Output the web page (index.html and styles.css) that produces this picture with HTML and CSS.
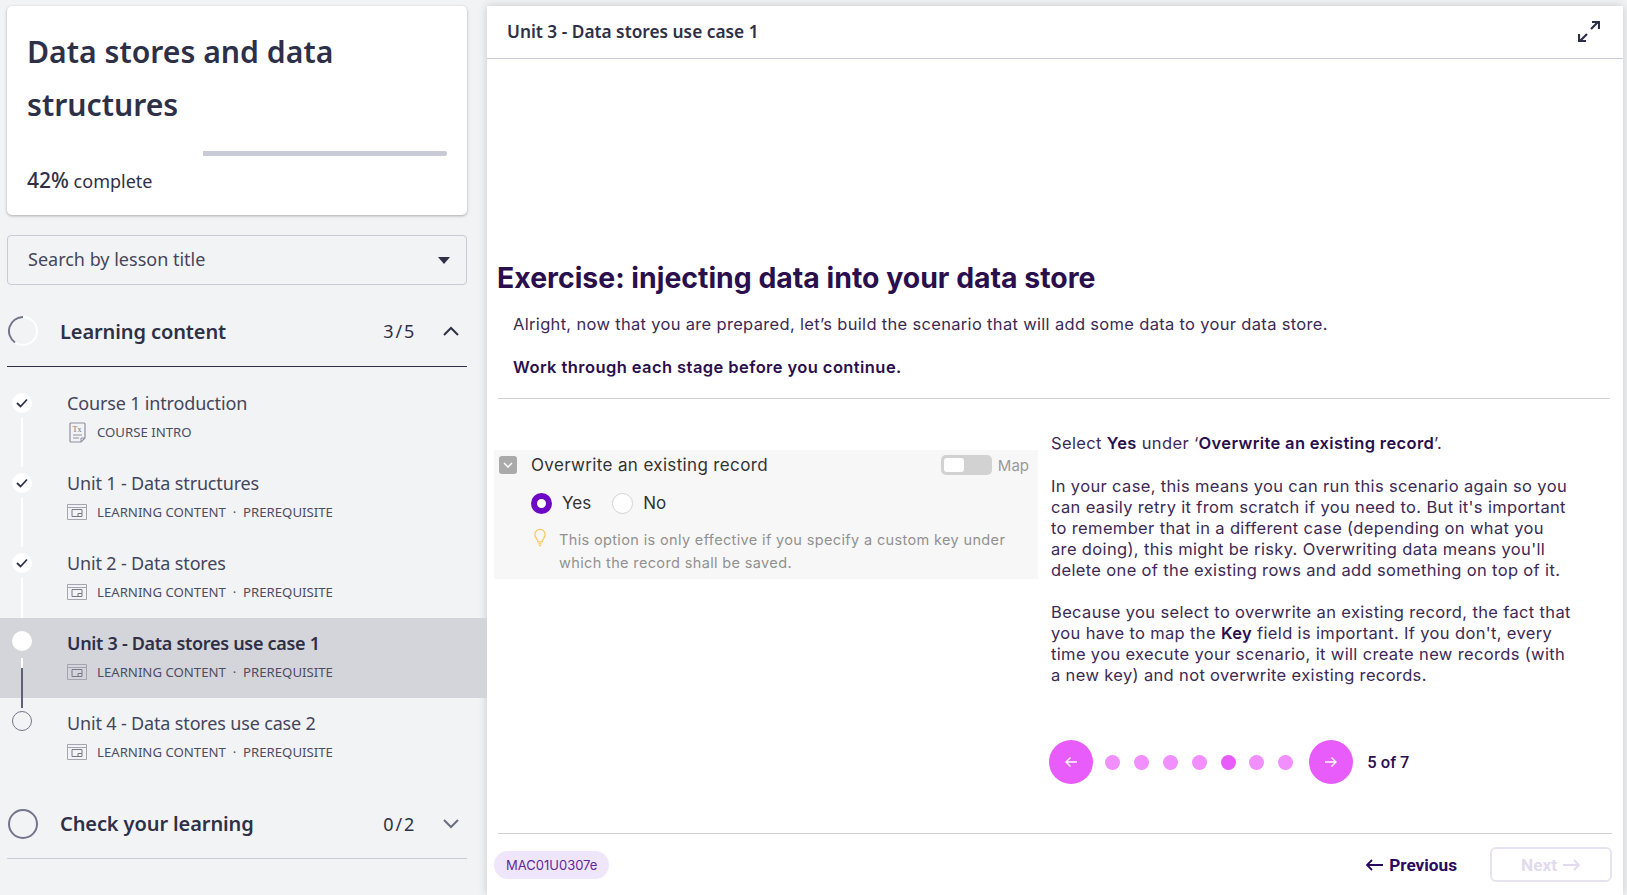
FILE: index.html
```html
<!DOCTYPE html>
<html>

<head>
    <title>Data stores and data structures</title>
    <link rel="stylesheet" href="styles.css">
</head>

<body>
    <div class="app">
        <aside class="sidebar">
            <div class="course-card">
                <h1>Data stores and data structures</h1>
                <div class="progress"><div class="progress-fill"></div></div>
                <p class="progress-text"><strong>42%</strong> complete</p>
            </div>

            <div class="lesson-search">
                <span>Search by lesson title</span>
                <span class="caret"></span>
            </div>

            <div class="section-head section-open">
                <svg class="ring" width="30" height="30" viewBox="0 0 30 30">
                    <circle cx="15" cy="15" r="14" fill="none" stroke="#fff" stroke-width="2"/>
                    <path d="M15 1A14 14 0 0 0 7 26.5" fill="none" stroke="#73758c" stroke-width="2"/>
                </svg>
                <span class="section-title">Learning content</span>
                <span class="section-count">3/5</span>
                <svg class="chevron" width="16" height="10" viewBox="0 0 16 10"><path d="M1 9l7-7 7 7" fill="none" stroke="#2e3047" stroke-width="2"/></svg>
            </div>

            <ul class="lessons">
                <li class="lesson lesson-done">
                    <span class="dot"><svg width="12" height="10" viewBox="0 0 12 10"><path d="M1 5l3.500 3.500L11 1.500" fill="none" stroke="#2e3047" stroke-width="1.800"/></svg></span>
                    <div class="lesson-title">Course 1 introduction</div>
                    <div class="lesson-tag">
                        <svg class="tag-icon" width="20" height="21" viewBox="0 0 20 21">
                            <path d="M4 1h13a1 1 0 0 1 1 1v14l-4 4H4a1 1 0 0 1-1-1V2a1 1 0 0 1 1-1z" fill="none" stroke="#8d8f9f" stroke-width="1.200"/>
                            <path d="M14 20v-4h4M6 13h9M6 16h6" fill="none" stroke="#8d8f9f"/>
                            <text x="5.500" y="10" font-size="8" font-family="Liberation Serif" fill="#6f7184">Tx</text>
                        </svg>
                        <span>COURSE INTRO</span>
                    </div>
                </li>
                <li class="lesson lesson-done">
                    <span class="dot"><svg width="12" height="10" viewBox="0 0 12 10"><path d="M1 5l3.500 3.500L11 1.500" fill="none" stroke="#2e3047" stroke-width="1.800"/></svg></span>
                    <div class="lesson-title">Unit 1 - Data structures</div>
                    <div class="lesson-tag">
                        <svg class="tag-icon" width="20" height="16" viewBox="0 0 20 16"><path d="M.5.500h19v15H.5zM.5 3.500h19" fill="#f2f3f5" stroke="#a3a5b3"/><path d="M5 5.500h10v7H5z" fill="none" stroke="#777989"/><path d="M11 12.500v-3h4" fill="none" stroke="#777989"/></svg>
                        <span>LEARNING CONTENT &nbsp;·&nbsp; PREREQUISITE</span>
                    </div>
                </li>
                <li class="lesson lesson-done">
                    <span class="dot"><svg width="12" height="10" viewBox="0 0 12 10"><path d="M1 5l3.500 3.500L11 1.500" fill="none" stroke="#2e3047" stroke-width="1.800"/></svg></span>
                    <div class="lesson-title">Unit 2 - Data stores</div>
                    <div class="lesson-tag">
                        <svg class="tag-icon" width="20" height="16" viewBox="0 0 20 16"><path d="M.5.500h19v15H.5zM.5 3.500h19" fill="#f2f3f5" stroke="#a3a5b3"/><path d="M5 5.500h10v7H5z" fill="none" stroke="#777989"/><path d="M11 12.500v-3h4" fill="none" stroke="#777989"/></svg>
                        <span>LEARNING CONTENT &nbsp;·&nbsp; PREREQUISITE</span>
                    </div>
                </li>
                <li class="lesson lesson-current">
                    <span class="dot"></span>
                    <div class="lesson-title">Unit 3 - Data stores use case 1</div>
                    <div class="lesson-tag">
                        <svg class="tag-icon" width="20" height="16" viewBox="0 0 20 16"><path d="M.5.500h19v15H.5zM.5 3.500h19" fill="#d4d5da" stroke="#a3a5b3"/><path d="M5 5.500h10v7H5z" fill="none" stroke="#777989"/><path d="M11 12.500v-3h4" fill="none" stroke="#777989"/></svg>
                        <span>LEARNING CONTENT &nbsp;·&nbsp; PREREQUISITE</span>
                    </div>
                </li>
                <li class="lesson lesson-todo">
                    <span class="dot"></span>
                    <div class="lesson-title">Unit 4 - Data stores use case 2</div>
                    <div class="lesson-tag">
                        <svg class="tag-icon" width="20" height="16" viewBox="0 0 20 16"><path d="M.5.500h19v15H.5zM.5 3.500h19" fill="#f2f3f5" stroke="#a3a5b3"/><path d="M5 5.500h10v7H5z" fill="none" stroke="#777989"/><path d="M11 12.500v-3h4" fill="none" stroke="#777989"/></svg>
                        <span>LEARNING CONTENT &nbsp;·&nbsp; PREREQUISITE</span>
                    </div>
                </li>
            </ul>

            <div class="section-head section-closed">
                <svg class="ring" width="30" height="30" viewBox="0 0 30 30"><circle cx="15" cy="15" r="14" fill="none" stroke="#73758c" stroke-width="2"/></svg>
                <span class="section-title">Check your learning</span>
                <span class="section-count">0/2</span>
                <svg class="chevron" width="16" height="10" viewBox="0 0 16 10"><path d="M1 1l7 7 7-7" fill="none" stroke="#6b6d80" stroke-width="2"/></svg>
            </div>
        </aside>

        <main class="panel">
            <header class="panel-head">
                <span>Unit 3 - Data stores use case 1</span>
                <svg width="22" height="21" viewBox="0 0 22 21"><path d="M13 8l7-7M14 1h7v7M9 13l-7 7M1 13v7h7" fill="none" stroke="#2e3047" stroke-width="2.200"/></svg>
            </header>

            <div class="lesson-body">
                <h2>Exercise: injecting data into your data store</h2>
                <p class="intro">Alright, now that you are prepared, let’s build the scenario that will add some data to your data store.</p>
                <p class="intro intro-strong">Work through each stage before you continue.</p>
                <hr class="rule">

                <div class="exercise">
                    <div class="setting">
                        <div class="setting-head">
                            <span class="setting-check"><svg width="10" height="6" viewBox="0 0 10 6"><path d="M1 1l4 4 4-4" fill="none" stroke="#fff" stroke-width="1.500"/></svg></span>
                            <span class="setting-label">Overwrite an existing record</span>
                            <span class="toggle"><span class="toggle-knob"></span></span>
                            <span class="map-label">Map</span>
                        </div>
                        <div class="radios">
                            <span class="radio radio-on"></span><span class="radio-label">Yes</span>
                            <span class="radio"></span><span class="radio-label">No</span>
                        </div>
                        <div class="hint">
                            <svg width="14" height="21" viewBox="0 0 14 21"><path d="M4.500 15.500c0-3-3.500-4.500-3.500-8.500a6 6 0 0 1 12 0c0 4-3.500 5.500-3.500 8.500zM5 18h4M6 20h2" fill="none" stroke="#fcc75a" stroke-width="1.500"/></svg>
                            <p>This option is only effective if you specify a custom key under which the record shall be saved.</p>
                        </div>
                    </div>

                    <div class="explain">
                        <p>Select <b>Yes</b> under ‘<b>Overwrite an existing record</b>’.</p>
                        <p>In your case, this means you can run this scenario again so you can easily retry it from scratch if you need to. But it's important to remember that in a different case (depending on what you are doing), this might be risky. Overwriting data means you'll delete one of the existing rows and add something on top of it.</p>
                        <p>Because you select to overwrite an existing record, the fact that you have to map the <b>Key</b> field is important. If you don't, every time you execute your scenario, it will create new records (with a new key) and not overwrite existing records.</p>
                    </div>
                </div>

                <div class="stepper">
                    <span class="step-btn"><svg width="14" height="12" viewBox="0 0 14 12"><path d="M13 6H2M6.500 1.500L2 6l4.500 4.500" fill="none" stroke="#fff" stroke-width="1.400"/></svg></span>
                    <span class="step-dots">
                        <span class="step-dot"></span>
                        <span class="step-dot"></span>
                        <span class="step-dot"></span>
                        <span class="step-dot"></span>
                        <span class="step-dot step-dot-on"></span>
                        <span class="step-dot"></span>
                        <span class="step-dot"></span>
                    </span>
                    <span class="step-btn"><svg width="14" height="12" viewBox="0 0 14 12"><path d="M1 6h11M7.500 1.500L12 6l-4.500 4.500" fill="none" stroke="#fff" stroke-width="1.400"/></svg></span>
                    <span class="step-count">5 of 7</span>
                </div>
            </div>

            <footer class="panel-foot">
                <span class="code-tag">MAC01U0307e</span>
                <span class="nav-prev"><svg width="18" height="12" viewBox="0 0 18 12"><path d="M18 6H2M7 1L2 6l5 5" fill="none" stroke="#2a0a5e" stroke-width="1.800"/></svg>Previous</span>
                <span class="nav-next">Next<svg width="18" height="12" viewBox="0 0 18 12"><path d="M0 6h16M11 1l5 5-5 5" fill="none" stroke="#e2dbee" stroke-width="1.800"/></svg></span>
            </footer>
        </main>
    </div>
</body>

</html>
```

FILE: styles.css
```css
* {
    box-sizing: border-box;
}

html,
body {
    height: 100%;
    margin: 0;
    overflow: hidden;
}

body {
    background-color: #f2f3f5;
    font-family: "Noto Sans", sans-serif;
    color: #2e3047;
}

.app {
    display: flex;
    height: 895px;
    padding: 6px 4px 0 0;
}

/* left column */
.sidebar {
    width: 487px;
    flex-shrink: 0;
}

.course-card {
    margin-left: 7px;
    width: 460px;
    height: 209px;
    padding: 19px 20px 0;
    background-color: #fff;
    border-radius: 5px;
    box-shadow: 0 1px 3px rgba(0, 0, 0, 0.3);
}

.course-card h1 {
    margin: 0;
    font-size: 30.200px;
    line-height: 53px;
    font-weight: 600;
    width: 380px;
}

.progress {
    height: 5px;
    margin-top: 20px;
    background-color: #c8cad6;
    border-radius: 2px;
}

.progress-fill {
    width: 42%;
    height: 5px;
    background-color: #fff;
}

.progress-text {
    margin: 11px 0 0;
    font-size: 18px;
    line-height: 26px;
}

.progress-text strong {
    font-weight: 500;
    font-size: 21px;
}

.lesson-search {
    display: flex;
    justify-content: space-between;
    align-items: center;
    margin: 20px 0 0 7px;
    width: 460px;
    height: 50px;
    padding: 0 16px 2px 20px;
    border: 1px solid #c8cad6;
    border-radius: 4px;
    font-size: 18px;
    color: #44465b;
}

.caret {
    width: 0;
    height: 0;
    margin-top: 2px;
    border-left: 6px solid transparent;
    border-right: 6px solid transparent;
    border-top: 7px solid #2e3047;
}

.section-head {
    display: flex;
    align-items: center;
    margin-left: 7px;
    width: 460px;
    height: 81px;
    padding: 11px 0 0 1px;
    border-bottom: 1px solid #c8cad6;
}

.section-open {
    height: 82px;
    border-bottom-color: #2e3047;
}

.section-title {
    margin-left: 22px;
    font-size: 20px;
    font-weight: 600;
    letter-spacing: -0.1px;
    flex: 1;
}

.section-count {
    font-size: 18px;
    letter-spacing: 1.800px;
    margin-right: 27px;
}

.chevron {
    margin-right: 8px;
}

.lessons {
    list-style: none;
    margin: 11px 0 0;
    padding: 0;
}

.lesson {
    position: relative;
    height: 80px;
    padding: 12px 0 0 67px;
}

.lesson-current {
    background-color: #d4d5da;
}

.lesson-current .lesson-title {
    font-weight: 600;
    letter-spacing: -0.3px;
    color: #2e3047;
}

.lesson .dot {
    position: absolute;
    left: 12px;
    top: 15px;
    width: 20px;
    height: 20px;
    display: flex;
    align-items: center;
    justify-content: center;
    background-color: #fff;
    border-radius: 50%;
}

.lesson-current .dot,
.lesson-todo .dot {
    top: 13px;
}

.lesson-todo .dot {
    background-color: transparent;
    border: 1px solid #73758c;
}

/* connector between two lesson dots */
.lesson::after {
    content: "";
    position: absolute;
    left: 21px;
    top: 40px;
    width: 2px;
    height: 49px;
    background-color: #fff;
}

.lesson-current::after {
    height: 50px;
    background: linear-gradient(#fff 10px, #5f6178 10px);
}

.lesson-todo::after {
    display: none;
}

.lesson-title {
    font-size: 18px;
    letter-spacing: -0.16px;
    line-height: 26px;
    color: #44465b;
}

.lesson-tag {
    display: flex;
    align-items: center;
    height: 20px;
    margin-top: 6px;
    font-size: 13.200px;
    color: #4c4e63;
}

.tag-icon {
    flex-shrink: 0;
    margin-right: 10px;
}

/* right panel */
.panel {
    flex: 1;
    display: flex;
    flex-direction: column;
    background-color: #fff;
    box-shadow: 0 0 9px rgba(0, 0, 0, 0.18);
    font-family: Inter, sans-serif;
}

.panel-head {
    display: flex;
    justify-content: space-between;
    align-items: center;
    height: 53px;
    padding: 0 23px 2px 20px;
    border-bottom: 1px solid #c8cad6;
    font-family: "Noto Sans", sans-serif;
    font-size: 17.300px;
    font-weight: 600;
}

.lesson-body {
    flex: 1;
    padding: 0 13px 0 10px;
}

.lesson-body h2 {
    margin: 199px 0 0;
    font-size: 28.400px;
    line-height: 40px;
    font-weight: 700;
    color: #2a0f4d;
}

.intro {
    margin: 15px 0 0 16px;
    font-size: 16.500px;
    letter-spacing: 0.32px;
    line-height: 22px;
    color: #3c2a55;
}

.intro-strong {
    margin-top: 21px;
    font-weight: 600;
    letter-spacing: 0.42px;
    color: #2a0f4d;
}

.rule {
    margin: 20px 0 0 1px;
    border: none;
    border-top: 1px solid #d6cfd6;
}

.exercise {
    display: flex;
    align-items: flex-start;
    margin-top: 34px;
}

.setting {
    width: 544px;
    height: 129px;
    margin-top: 17px;
    margin-left: -3px;
    padding: 5px 9px 0 5px;
    background-color: #f7f7f7;
    font-size: 17px;
    letter-spacing: 0.35px;
    color: #333;
}

.setting-head {
    display: flex;
    align-items: center;
    height: 20px;
}

.setting-check {
    display: flex;
    align-items: center;
    justify-content: center;
    width: 18px;
    height: 18px;
    margin-right: 14px;
    background-color: #aaa;
    border-radius: 3px;
}

.setting-label {
    flex: 1;
}

.toggle {
    width: 51px;
    height: 20px;
    padding: 3px;
    background-color: #d2d2d2;
    border-radius: 5px;
}

.toggle-knob {
    display: block;
    width: 20px;
    height: 14px;
    background-color: #fff;
    border-radius: 3px;
}

.map-label {
    margin-left: 6px;
    font-size: 15px;
    letter-spacing: 0;
    color: #999;
}

.radios {
    display: flex;
    align-items: center;
    height: 22px;
    margin: 17px 0 0 32px;
    letter-spacing: 0;
}

.radio {
    width: 21px;
    height: 21px;
    background-color: #fff;
    border: 1px solid #d2d2d2;
    border-radius: 50%;
}

.radio-on {
    border: 6px solid #6d08c4;
}

.radio-label {
    margin: 0 21px 0 10px;
}

.hint {
    display: flex;
    gap: 13px;
    margin: 13px 0 0 35px;
}

.hint p {
    margin: 1px 0 0;
    max-width: 470px;
    font-size: 14.500px;
    letter-spacing: 0.36px;
    line-height: 23px;
    color: #919191;
}

.explain {
    width: 522px;
    margin-left: 13px;
    font-size: 16.500px;
    letter-spacing: 0.35px;
    line-height: 21px;
    color: #3c2a55;
}

.explain p {
    margin: 0 0 21px;
}

.explain p:first-child {
    margin-bottom: 22px;
}

.explain p:last-child {
    margin-bottom: 0;
}

.explain b {
    font-weight: 600;
    color: #2a0f4d;
}

.stepper {
    display: flex;
    align-items: center;
    margin: 54px 0 0 552px;
}

.step-btn {
    display: flex;
    align-items: center;
    justify-content: center;
    width: 44px;
    height: 44px;
    background-color: #e85cfc;
    border-radius: 50%;
}

.step-dots {
    display: flex;
    gap: 13.900px;
    margin: 0 16px 0 12px;
}

.step-dot {
    width: 15px;
    height: 15px;
    background-color: #f08ffd;
    border-radius: 50%;
}

.step-dot-on {
    background-color: #e85cfc;
}

.step-count {
    margin-left: 14px;
    font-family: Roboto, sans-serif;
    font-size: 16.500px;
    font-weight: 500;
    color: #2a0f4d;
}

.panel-foot {
    display: flex;
    align-items: center;
    height: 62px;
    margin: 0 11px 0 11px;
    border-top: 1px solid #d6cfd6;
    font-family: Roboto, sans-serif;
    font-size: 17.200px;
    font-weight: 700;
}

.code-tag {
    display: block;
    margin-left: -4px;
    padding: 0 12px;
    line-height: 28px;
    background-color: #efe6fb;
    border-radius: 14px;
    font-family: Inter, sans-serif;
    font-size: 13px;
    font-weight: 400;
    color: #5d2a9a;
}

.nav-prev {
    display: flex;
    align-items: center;
    gap: 6px;
    margin-left: auto;
    color: #2a0a5e;
}

.nav-next {
    display: flex;
    align-items: center;
    justify-content: center;
    gap: 6px;
    width: 122px;
    height: 35px;
    margin-left: 33px;
    border: 2px solid #e8e3f1;
    border-radius: 6px;
    color: #e2dbee;
}
```
